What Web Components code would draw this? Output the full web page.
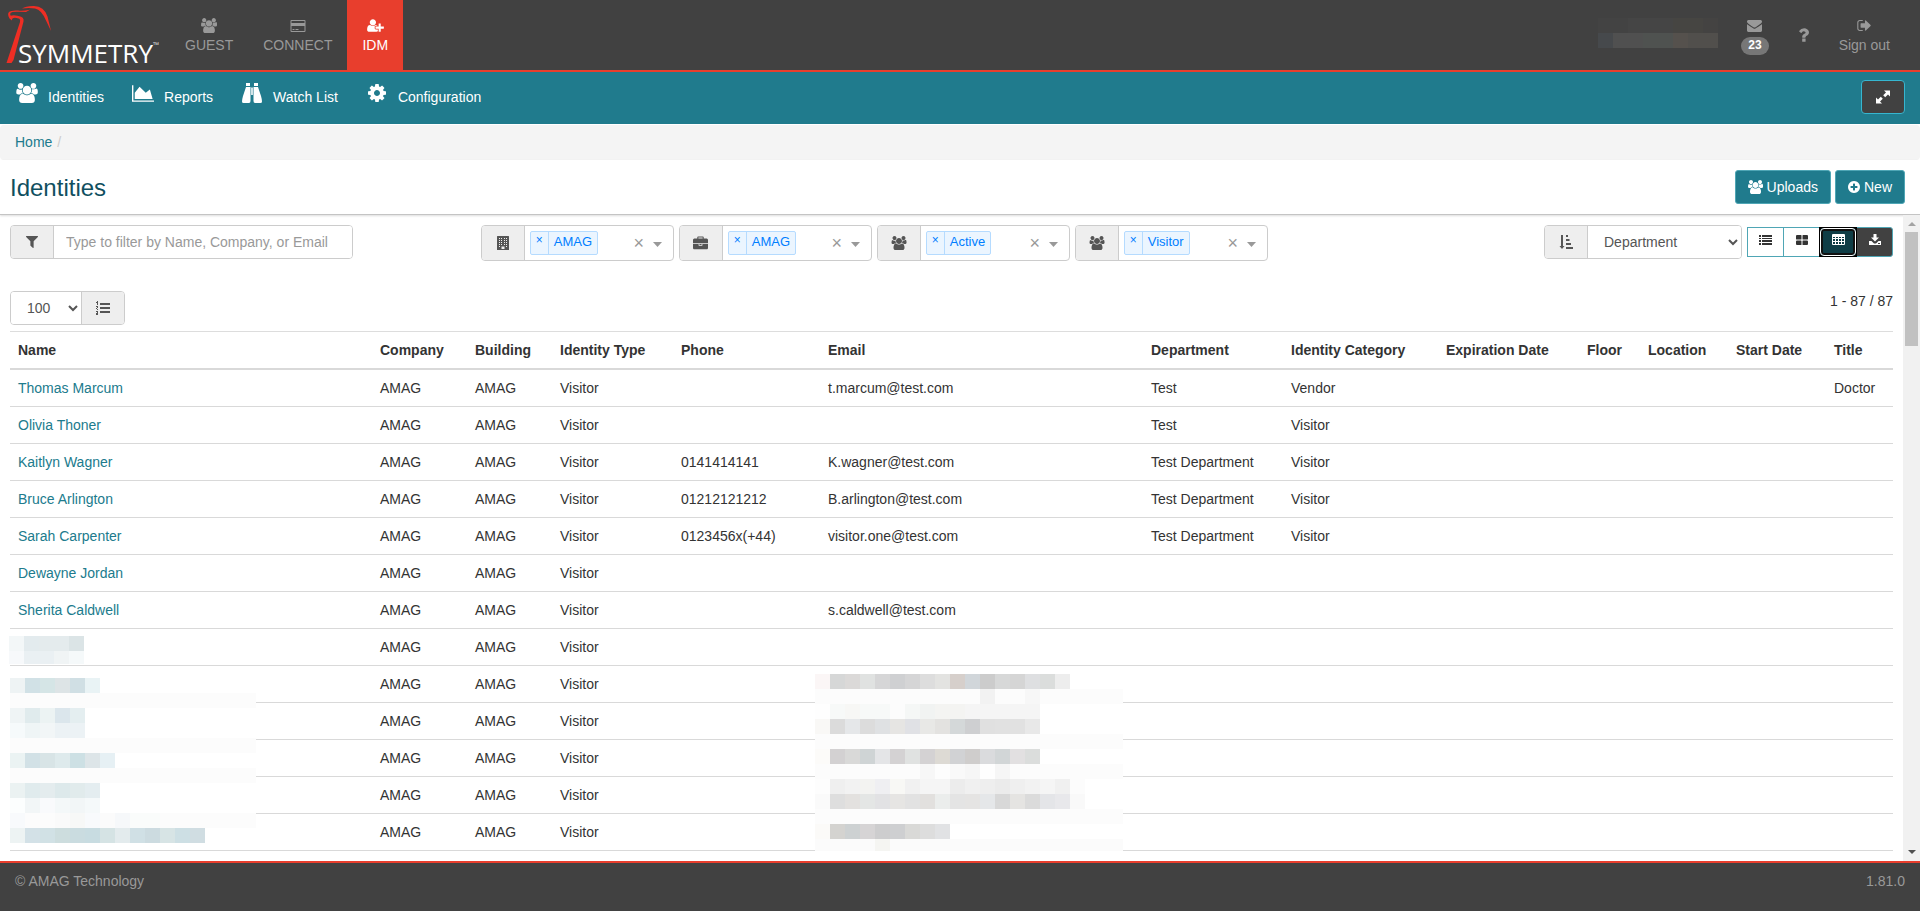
<!DOCTYPE html>
<html lang="en">
<head>
<meta charset="utf-8">
<title>Symmetry - Identities</title>
<style>
html,body{margin:0;height:100%}
body{font:14px/20px "Liberation Sans",Arial,sans-serif;color:#333;background:#fff;
--teal:#207b8d;--dark:#414141;--red:#e83e2d;--line:#ccc}
</style>
</head>
<body>
<idm-app></idm-app>
<script>
const ICONS = {
users:['64 0 1920 1792','<path d="M657 896q-162 5-265 128h-134q-82 0-138-40.5t-56-118.5q0-353 124-353 6 0 43.5 21t97.5 42.5 119 21.5q67 0 133-23-5 37-5 66 0 159 92 283zm1071 637q0 120-73 189.5t-194 69.5h-874q-121 0-194-69.5t-73-189.5q0-53 3.5-103.5t14-109 26.5-108.5 43-97.5 62-81 85.5-53.5 111.5-20q10 0 43 21.5t73 48 107 48 135 21.5 135-21.5 107-48 73-48 43-21.5q61 0 111.5 20t85.5 53.5 62 81 43 97.5 26.5 108.5 14 109 3.5 103.5zm-1024-1277q0 106-75 181t-181 75-181-75-75-181 75-181 181-75 181 75 75 181zm704 384q0 159-112.5 271.5t-271.5 112.5-271.5-112.5-112.5-271.5 112.5-271.5 271.5-112.5 271.5 112.5 112.5 271.5zm576 225q0 78-56 118.5t-138 40.5h-134q-103-123-265-128 92-124 92-283 0-29-5-66 66 23 133 23 59 0 119-21.5t97.5-42.5 43.5-21q124 0 124 353zm-128-609q0 106-75 181t-181 75-181-75-75-181 75-181 181-75 181 75 75 181z"/>'],
card:['0 0 16 14','<path fill-rule="evenodd" d="M1.500 1h13q1 0 1 1v10q0 1-1 1h-13q-1 0-1-1V2q0-1 1-1zM1.500 2v2h13V2zM1.500 7v5h13V7zM2.500 10h2v1h-2zM5.500 10h3v1h-3z"/>'],
userplus:['0 100 2048 1592','<path d="M704 896q-159 0-271.5-112.5t-112.5-271.5 112.5-271.5 271.5-112.5 271.5 112.5 112.5 271.5-112.5 271.5-271.5 112.5zm960 128h352q13 0 22.5 9.5t9.5 22.5v192q0 13-9.5 22.5t-22.5 9.500h-352v352q0 13-9.500 22.500t-22.500 9.500h-192q-13 0-22.500-9.500t-9.500-22.500v-352h-352q-13 0-22.500-9.500t-9.500-22.500v-192q0-13 9.500-22.500t22.500-9.500h352v-352q0-13 9.500-22.500t22.500-9.500h192q13 0 22.500 9.500t9.500 22.500v352zm-736 224q0 52 38 90t90 38h256v238q-68 50-171 50h-874q-121 0-194-69t-73-190q0-53 3.500-103.500t14-109 26.500-108.500 43-97.500 62-81 85.500-53.500 111.500-20q19 0 39 17 79 61 154.500 91.500t164.500 30.500 164.500-30.500 154.500-91.500q20-17 39-17 132 0 217 96h-223q-52 0-90 38t-38 90v192z"/>'],
mail:['0 256 1792 1408','<path d="M1792 710v794q0 66-47 113t-113 47h-1472q-66 0-113-47t-47-113v-794q44 49 101 87 362 246 497 345 57 42 92.5 65.5t94.5 48 110 24.5h2q51 0 110-24.5t94.5-48 92.5-65.5q170-123 498-345 57-39 100-87zm0-294q0 79-49 151t-122 123q-376 261-468 325-10 7-42.5 31t-54 38.5-52 32.5-57.5 27-50 9h-2q-23 0-50-9t-57.5-27-52-32.5-54-38.5-42.5-31q-91-64-262-182.5t-205-142.500q-62-42-117-115.500t-55-136.500q0-78 41.500-130t118.500-52h1472q65 0 112.500 47t47.500 113z"/>'],
question:['376 256 1032 1280','<path d="M1088 1256v240q0 16-12 28t-28 12h-240q-16 0-28-12t-12-28v-240q0-16 12-28t28-12h240q16 0 28 12t12 28zm316-600q0 54-15.5 101t-35 76.5-55 59.5-57.5 43.5-61 35.5q-41 23-68.5 65t-27.5 67q0 17-12 32.5t-28 15.5h-240q-15 0-25.5-18.5t-10.5-37.5v-45q0-83 65-156.5t143-108.5q59-27 84-56t25-76q0-42-46.5-74t-107.5-32q-65 0-108 29-35 25-107 115-13 16-31 16-12 0-25-8l-164-125q-13-10-15.5-25t5.5-28q160-266 464-266 80 0 161 31t146 83 106 127.5 41 158.5z"/>'],
signout:['64 256 1568 1280','<path d="M704 1440q0 4 1 20t.5 26.5-3 23.5-10 19.5-20.5 6.5h-320q-119 0-203.5-84.5t-84.5-203.5v-704q0-119 84.5-203.5t203.5-84.5h320q13 0 22.5 9.5t9.5 22.5q0 4 1 20t.5 26.5-3 23.5-10 19.5-20.5 6.5h-320q-66 0-113 47t-47 113v704q0 66 47 113t113 47h312l11.5 1 11.5 3 8 5.5 7 9 2 13.5zm928-544q0 26-19 45l-544 544q-19 19-45 19t-45-19-19-45v-288h-448q-26 0-45-19t-19-45v-384q0-26 19-45t45-19h448v-288q0-26 19-45t45-19 45 19l544 544q19 19 19 45z"/>'],
chart:['0 128 2048 1536','<path d="M2048 1536v128h-2048v-1536h128v1408h1920zm-384-1024l256 896h-1664v-576l448-576 576 576z"/>'],
binoculars:['0 0 20 20','<path d="M4 0h4v3H4zM12 0h4v3h-4zM4 4h4.500v14q0 2-1.500 2H1.500Q0 20 0 18.500q0-2 1-5.500zM11.500 4H16l3 9q1 3.500 1 5.500 0 1.500-1.500 1.500H13q-1.500 0-1.500-2zM9.200 4.500h1.600V12H9.200z"/>'],
gear:['128 128 1536 1536','<path fill-rule="evenodd" d="M1152 896q0-106-75-181t-181-75-181 75-75 181 75 181 181 75 181-75 75-181zm512-109v222q0 12-8 23t-20 13l-185 28q-19 54-39 91 35 50 107 138 10 12 10 25t-9 23q-27 37-99 108t-94 71q-12 0-26-9l-138-108q-44 23-91 38-16 136-29 186-7 28-36 28h-222q-14 0-24.5-8.5t-11.5-21.5l-28-184q-49-16-90-37l-141 107q-10 9-25 9-14 0-25-11-126-114-165-168-7-10-7-23 0-12 8-23 15-21 51-66.5t54-70.5q-27-50-41-99l-183-27q-13-2-21-12.5t-8-23.5v-222q0-12 8-23t19-13l186-28q14-46 39-92-40-57-107-138-10-12-10-24 0-10 9-23 26-36 98.5-107.5t94.5-71.5q13 0 26 10l138 107q44-23 91-38 16-136 29-186 7-28 36-28h222q14 0 24.5 8.5t11.5 21.5l28 184q49 16 90 37l142-107q9-9 24-9 13 0 25 10 129 119 165 170 7 8 7 22 0 12-8 23-15 21-51 66.5t-54 70.5q26 50 41 98l183 28q13 2 21 12.5t8 23.5z"/>'],
expand:['0 0 14 14','<path d="M8 1h6v6l-2-2-2.800 2.800-2-2L10 3zM0 8l2 2 2.800-2.800 2 2L4 12l2 2H0z" transform="translate(0 -.5)"/>'],
plus:['128 128 1536 1536','<path fill-rule="evenodd" d="M1344 960v-128q0-26-19-45t-45-19h-256v-256q0-26-19-45t-45-19h-128q-26 0-45 19t-19 45v256h-256q-26 0-45 19t-19 45v128q0 26 19 45t45 19h256v256q0 26 19 45t45 19h128q26 0 45-19t19-45v-256h256q26 0 45-19t19-45zm320-64q0 209-103 385.5t-279.5 279.5-385.5 103-385.5-103-279.5-279.5-103-385.5 103-385.5 279.5-279.5 385.5-103 385.5 103 279.5 279.5 103 385.5z"/>'],
filter:['192 256 1408 1408','<path d="M1595 295q17 41-14 70l-493 493v742q0 42-39 59-13 5-25 5-27 0-45-19l-256-256q-19-19-19-45v-486l-493-493q-31-29-14-70 17-39 59-39h1280q42 0 59 39z"/>'],
building:['0 0 12 14','<path fill-rule="evenodd" d="M.500 0h11q.5 0 .5.500v13q0 .5-.5.500h-11q-.5 0-.5-.500V.500Q0 0 .500 0zM2 2v1h1V2zM4 2v1h1V2zM7 2v1h1V2zM9 2v1h1V2zM2 4v1h1V4zM4 4v1h1V4zM7 4v1h1V4zM9 4v1h1V4zM2 6v1h1V6zM4 6v1h1V6zM7 6v1h1V6zM9 6v1h1V6zM2 8v1h1V8zM4 8v1h1V8zM7 8v1h1V8zM9 8v1h1V8zM2 10v1h1v-1zM9 10v1h1v-1zM4.500 10.500V13h3v-2.500z"/>'],
briefcase:['0 32 1792 1504','<path fill-rule="evenodd" d="M640 256h512v-128h-512v128zm1152 640v480q0 66-47 113t-113 47h-1472q-66 0-113-47t-47-113v-480h672v160q0 26 19 45t45 19h320q26 0 45-19t19-45v-160h672zm-768 0v128h-256v-128h256zm768-480v384h-1792v-384q0-66 47-113t113-47h352v-160q0-40 28-68t68-28h576q40 0 68 28t28 68v160h352q66 0 113 47t47 113z"/>'],
sort:['0 0 14 14','<path d="M2 0h2v11h1.500L3 14 .5 11H2zM7 0h2v2H7zM7 4h3.500v2H7zM7 8h5v2H7zM7 12h7v2H7z"/>'],
list:['0 0 14 12','<path d="M0 1h2v2H0zM3 1h10v2H3zM0 4h2v1H0zM3 4h10v1H3zM0 6h2v2H0zM3 6h10v2H3zM0 9h2v2H0zM3 9h10v2H3z"/>'],
large:['0 0 12 12','<path d="M1 1h4q.5 0 .5.500v3.500q0 .5-.5.500H1Q0 5.500 0 5V2q0-1 1-1zM7 1h4q1 0 1 1v3q0 .5-1 .5H7Q6.500 5.500 6.500 5V1.500Q6.500 1 7 1zM1 6.500h4q.5 0 .5.500v3.500q0 .5-.5.500H1q-1 0-1-1V7.500q0-1 1-1zM7 6.500h4q1 0 1 1V10q0 1-1 1H7q-.5 0-.5-.500V7q0-.5.500-.500z"/>'],
table:['0 0 13 12','<path fill-rule="evenodd" d="M1 0h11q1 0 1 1v9q0 1-1 1H1q-1 0-1-1V1q0-1 1-1zM1 3v1h2V3zM4 3v1h2V3zM7 3v1h2V3zM10 3v1h2V3zM1 5v2h2V5zM4 5v2h2V5zM7 5v2h2V5zM10 5v2h2V5zM1 8v2h2V8zM4 8v2h2V8zM7 8v2h2V8zM10 8v2h2V8z"/>'],
download:['0 0 12 12','<path fill-rule="evenodd" d="M4.500 0h3v3.500H10L6 7.500 2 3.500h2.500zM0 7h2.500L5 9.500h2L9.500 7H12v4H0zM9 9v1h2V9z"/>'],
listol:['0 0 14 14','<path d="M4 2h10v2H4zM4 6h10v2H4zM4 10h10v2H4zM1 0h1v4H1zM0 1h1v1H0zM0 5h2v1H0zM1 6h1v1H1zM0 7h1v1H0zM1 8h1v1H1zM0 10h2v1H0zM1 11h1v3H1zM0 12h1v1H0zM0 13h1v1H0z"/>']
};
const define = (name, html) => {
  const t = document.createElement('template');
  t.innerHTML = html;
  customElements.define(name, class extends HTMLElement {
    constructor(){ super(); this.attachShadow({mode:'open'}).append(t.content.cloneNode(true)); }
  });
};

customElements.define('sym-icon', class extends HTMLElement {
  connectedCallback(){
    if (this.shadowRoot) return;
    const [box, body] = ICONS[this.getAttribute('name')];
    const w = this.getAttribute('w') || 14, h = this.getAttribute('h') || w;
    this.attachShadow({mode:'open'}).innerHTML =
      `<style>:host{display:inline-flex;flex:none}svg{display:block;fill:currentColor}</style>
       <svg width="${w}" height="${h}" viewBox="${box}" aria-hidden="true">${body}</svg>`;
  }
});

/* Pixelated cover for private details: rows of colours, '/' splits rows, '*n' repeats. */
customElements.define('privacy-mosaic', class extends HTMLElement {
  connectedCallback(){
    if (this.shadowRoot) return;
    const w = +this.getAttribute('w'), h = +this.getAttribute('h');
    let out = '';
    this.getAttribute('rows').split('/').forEach((row, y) => {
      let x = 0;
      row.trim().split(/\s+/).filter(Boolean).forEach(c => {
        const [col, n = 1] = c.split('*');
        out += `<rect x="${x}" y="${y*15}" width="${n*15}" height="15" fill="#${col}"/>`;
        x += n * 15;
      });
    });
    this.attachShadow({mode:'open'}).innerHTML =
      `<style>:host{display:block}svg{display:block;background:var(--mosaic-bg,#fff)}</style>
       <svg width="${w}" height="${h}" shape-rendering="crispEdges" aria-hidden="true">${out}</svg>`;
  }
});

define('brand-logo', `<style>
:host{display:block;position:relative;width:162px;height:70px}
svg{display:block}
span{position:absolute;left:18px;top:36px;font:26px/34px "Open Sans",sans-serif;color:#fff}
small{position:absolute;left:153px;top:41px;font:8px/8px "Open Sans",sans-serif;color:#ddd}
</style>
<svg width="60" height="70" viewBox="0 0 60 70" aria-hidden="true">
<path fill="#ee2e24" d="M6.500 63 20 22q.5-3-1.500-3.400Q14.500 17 12.500 18.500q-.8.800-.5 2L9.500 18.500Q7 14 9 12q2-2 9-1.500 5 .6 12-.8l-4 2.300-7-.2q-7-.4-8.500 1.200-.8 1.500.3 2.800Q13 14.500 18.500 16q6 .8 5 5.500L13.500 60l-2 3z"/>
<path fill="#ee2e24" d="M22 8.500Q26 5.800 34 6q10 .2 13.500 10.500L51 31l-5-10.500Q41.500 9.800 35 8.500 29 7.600 22 8.500z"/></svg>
<span>SYMMETRY</span><small>™</small>`);

define('header-item', `<style>
:host{display:block;color:#999}
:host([active]){background:var(--red);color:#fff}
a{display:flex;flex-direction:column;align-items:center;gap:2px;height:52px;padding:18px 15px 0;color:inherit;text-decoration:none}
.i{display:flex;height:15px;align-items:center}
</style><a href="#"><span class="i"><slot name="icon"></slot></span><slot></slot></a>`);

define('app-header', `<style>
:host{display:flex;height:70px;background:var(--dark);border-bottom:2px solid var(--red);flex:none}
nav{display:flex;margin-left:8px}
.right{display:flex;margin-left:auto;padding-right:15px}
privacy-mosaic{margin:18px 8px 0 0;--mosaic-bg:#414141}
.badge{background:#777;color:#fff;font:bold 12px/12px "Liberation Sans",Arial,sans-serif;padding:2px 7px 4px;border-radius:10px;margin-top:2px}
.help{display:flex;padding:28px 15px 0 14px;color:#999}
</style>
<brand-logo></brand-logo>
<nav aria-label="Modules">
<header-item><sym-icon slot="icon" name="users" w="16" h="15"></sym-icon>GUEST</header-item>
<header-item><sym-icon slot="icon" name="card" w="16" h="14"></sym-icon>CONNECT</header-item>
<header-item active><sym-icon slot="icon" name="userplus" w="17" h="13"></sym-icon>IDM</header-item>
</nav>
<div class="right">
<privacy-mosaic w="120" h="30" rows="434343*2 454545*3 464542*2 444342/46494c 505050*2 4f5250*2 55514d 514f4c*2"></privacy-mosaic>
<header-item><sym-icon slot="icon" name="mail" w="15" h="12"></sym-icon><span class="badge">23</span></header-item>
<a class="help" href="#" aria-label="Help"><sym-icon name="question" w="11" h="14"></sym-icon></a>
<header-item><sym-icon slot="icon" name="signout" w="14" h="11"></sym-icon>Sign out</header-item>
</div>`);

define('nav-link', `<style>
:host{display:block}
a{display:flex;align-items:flex-start;color:#fff;text-decoration:none}
.i{display:flex;width:22px;height:20px;align-items:center;justify-content:center;margin-right:10px}
.t{margin-top:4px}
</style><a href="#"><span class="i"><slot name="icon"></slot></span><span class="t"><slot></slot></span></a>`);

define('module-nav', `<style>
:host{display:flex;align-items:flex-start;height:52px;box-sizing:border-box;padding:8px 15px 0 16px;background:var(--teal);flex:none}
nav{display:flex;gap:28px;padding-top:3px}
button{margin-left:auto;width:44px;height:34px;padding:0;display:flex;align-items:center;justify-content:center;background:var(--dark);border:1px solid #36b6d0;border-radius:4px;color:#fff}
</style>
<nav aria-label="Identity management">
<nav-link><sym-icon slot="icon" name="users" w="22" h="20"></sym-icon>Identities</nav-link>
<nav-link><sym-icon slot="icon" name="chart" w="22" h="17"></sym-icon>Reports</nav-link>
<nav-link><sym-icon slot="icon" name="binoculars" w="20" h="20"></sym-icon>Watch List</nav-link>
<nav-link><sym-icon slot="icon" name="gear" w="18" h="18"></sym-icon>Configuration</nav-link>
</nav>
<button aria-label="Full screen"><sym-icon name="expand" w="14"></sym-icon></button>`);

define('bread-crumb', `<style>
:host{display:block;background:#f4f4f4;border-radius:4px;margin-top:1px;padding:7px 15px 8px;flex:none}
a{color:var(--teal);text-decoration:none}i{color:#ccc;font-style:normal;padding:0 5px}
</style><a href="#">Home</a><i>/</i>`);

define('page-title', `<style>
:host{display:flex;align-items:center;height:54px;padding:0 15px 0 10px;border-bottom:1px solid #c4c4c4;box-shadow:0 1px 2px #ddd;flex:none}
h1{margin:0;padding-top:2px;font-size:24px;line-height:28px;font-weight:400;color:#104f5f}
div{margin-left:auto;display:flex;gap:4px}
button{height:34px;padding:0 12px;display:flex;align-items:center;gap:4px;background:var(--teal);border:1px solid #4fa6b5;border-radius:3px;color:#fff;font:inherit}
</style><h1>Identities</h1><div>
<button><sym-icon name="users" w="15" h="14"></sym-icon>Uploads</button>
<button><sym-icon name="plus" w="12" h="12"></sym-icon>New</button></div>`);

/* A bordered control with a grey icon cell before or after the slotted field. */
define('input-group', `<style>
:host{display:flex;height:34px;box-sizing:border-box;border:1px solid #ccc;border-radius:4px;background:#fff;overflow:hidden;color:#555}
.a{width:42px;flex:none;display:flex;align-items:center;justify-content:center;background:#eee;border-right:1px solid #ccc}
.f{flex:1;display:flex;min-width:0}
:host([after]) .a{order:1;border-right:0;border-left:1px solid #ccc}
</style><span class="a"><slot name="icon"></slot></span><span class="f"><slot></slot></span>`);

customElements.define('tag-select', class extends HTMLElement {
  connectedCallback(){
    if (this.shadowRoot) return;
    const tag = this.getAttribute('tag'), label = this.getAttribute('label');
    this.attachShadow({mode:'open'}).innerHTML = `<style>
:host{display:block;width:193px}
input-group{height:36px}
.box{flex:1;display:flex;align-items:center;padding:0 11px 0 5px}
.tag{display:flex;height:22px;border:1px solid #b5dbff;border-radius:2px;background:#ebf5ff;color:#007eff;font-size:13px;line-height:19px}
.tag button{width:18px;border-right:1px solid #b5dbff;color:#007eff;font-size:12px;line-height:16px;align-self:stretch;display:flex;justify-content:center}
.tag span{padding:0 5px}
button{border:0;background:none;padding:0;font:inherit;color:#999}
.clear{margin-left:auto;font-size:18px;line-height:20px;width:12px}
.open{width:9px;height:5px;margin:2px 0 0 8px}
.open svg{display:block;fill:#999}
</style>
<input-group role="group" aria-label="${label}"><sym-icon slot="icon" name="${this.getAttribute('icon')}" w="${this.getAttribute('w')}" h="14"></sym-icon>
<div class="box"><div class="tag"><button aria-label="Remove ${tag}">×</button><span>${tag}</span></div>
<button class="clear" aria-label="Clear ${label}">×</button>
<button class="open" aria-label="Open ${label}"><svg width="9" height="5"><path d="M0 0h9L4.500 5z"/></svg></button></div></input-group>`;
  }
});

define('view-switch', `<style>
:host{display:flex;height:30px;margin-top:2px}
button{width:37px;margin-left:-1px;padding:0 0 4px 1px;display:flex;align-items:center;justify-content:center;background:#fff;border:1px solid #4fa6b5;color:#333}
button:first-child{margin-left:0;border-radius:3px 0 0 3px}
button:last-child{border-radius:0 3px 3px 0;background:var(--dark);color:#fff}
button.on{position:relative;width:38px;background:#0f3d46;border-color:#000;color:#fff;overflow:hidden}
button.on::after{content:"";position:absolute;inset:0;border:1px solid #fff;border-radius:4px;box-shadow:inset 0 0 0 2px #111,0 0 0 3px #000}
</style>
<button aria-label="List view"><sym-icon name="list" w="14" h="12"></sym-icon></button>
<button aria-label="Card view"><sym-icon name="large" w="12" h="12"></sym-icon></button>
<button class="on" aria-label="Table view" aria-pressed="true"><sym-icon name="table" w="13" h="12"></sym-icon></button>
<button aria-label="Download"><sym-icon name="download" w="12" h="12"></sym-icon></button>`);

define('filter-bar', `<style>
:host{display:grid;grid-template-columns:1fr 2fr 1fr;height:36px;align-items:start}
.search{width:343px}
input,select{flex:1;min-width:0;border:0;background:#fff;font:inherit;color:#555;padding:0 12px;outline:0}
input::placeholder{color:#999;opacity:1}
.tags{display:flex;gap:5px}
.right{display:flex;justify-content:flex-end;gap:6px}
.sort{width:198px}
.sort select{padding-right:0}
</style>
<input-group class="search"><sym-icon slot="icon" name="filter" w="12" h="12"></sym-icon><input type="text" aria-label="Filter identities" placeholder="Type to filter by Name, Company, or Email"></input-group>
<div class="tags">
<tag-select icon="building" w="12" label="Building" tag="AMAG"></tag-select>
<tag-select icon="briefcase" w="15" label="Company" tag="AMAG"></tag-select>
<tag-select icon="users" w="16" label="Status" tag="Active"></tag-select>
<tag-select icon="users" w="16" label="Identity type" tag="Visitor"></tag-select>
</div>
<div class="right"><input-group class="sort"><sym-icon slot="icon" name="sort" w="14"></sym-icon><select aria-label="Sort by"><option>Department</option></select></input-group>
<view-switch></view-switch></div>`);

define('pager-bar', `<style>
:host{display:flex;justify-content:space-between;margin:30px 0 6px}
input-group{width:115px}
select{flex:1;border:0;background:#fff;font:inherit;color:#555;padding:0 0 0 12px}
</style><input-group after><sym-icon slot="icon" name="listol" w="14"></sym-icon><select aria-label="Rows per page"><option>100</option></select></input-group><span>1 - 87 / 87</span>`);

const COLS = [['Name',0],['Company',95],['Building',85],['Identity Type',121],['Phone',147],['Email',323],['Department',140],['Identity Category',155],['Expiration Date',141],['Floor',61],['Location',88],['Start Date',98],['Title',67]];
const PEOPLE = [
 ['Thomas Marcum','','t.marcum@test.com','Test','Vendor','Doctor'],
 ['Olivia Thoner','','','Test','Visitor',''],
 ['Kaitlyn Wagner','0141414141','K.wagner@test.com','Test Department','Visitor',''],
 ['Bruce Arlington','01212121212','B.arlington@test.com','Test Department','Visitor',''],
 ['Sarah Carpenter','0123456x(+44)','visitor.one@test.com','Test Department','Visitor',''],
 ['Dewayne Jordan','','','','',''],
 ['Sherita Caldwell','','s.caldwell@test.com','','',''],
 ...Array.from({length:6}, () => ['','','','','',''])
];
customElements.define('identity-table', class extends HTMLElement {
  connectedCallback(){
    if (this.shadowRoot) return;
    this.attachShadow({mode:'open'}).innerHTML = `<style>
:host{display:block;position:relative}
table{width:100%;table-layout:fixed;border-collapse:separate;border-spacing:0;border-top:1px solid #ddd}
th,td{height:20px;padding:8px;text-align:left;white-space:nowrap;border-bottom:1px solid #d9d9d9}
th{border-bottom-width:2px}
a{color:var(--teal);text-decoration:none}
privacy-mosaic{position:absolute}
.n1{left:-1px;top:305px}.n2{left:0;top:347px}.em{right:770px;top:343px}
</style><table><colgroup>${COLS.map(([,w]) => w ? `<col style="width:${w}px">` : '<col>').join('')}</colgroup>
<thead><tr>${COLS.map(([c]) => `<th scope="col">${c}</th>`).join('')}</tr></thead>
<tbody>${PEOPLE.map(([n,p,e,d,c,t]) => '<tr>' + [n ? `<a href="#">${n}</a>` : '','AMAG','AMAG','Visitor',p,e,d,c,'','','','',t].map(v => `<td>${v}</td>`).join('') + '</tr>').join('')}</tbody></table>
<privacy-mosaic class="n1" w="75" h="28" rows="f3f7f8 e3ebee e4ebed*2 dbe4e6/f7f9fb eaf0f3*2 f0f4f5 f5f9fa"></privacy-mosaic>
<privacy-mosaic class="n2" w="246" h="165" rows="eef3f4 d1e1e6 d5e5e6 dde4e6 d0dfe4 e9f3f5/fcfcfc*17/eff4f5 e0ebed ecf3f3 dbe6ec e4eef0/f6fafb eff5f6 f2f6f7 ecf2f5*2/fcfcfc*17/ebf3f3 d2e1e6 d8e4e6 deeaec cde0e4 dde5e8 e6f0f4/fcfcfc*17/ebf2f2 e0ebed e4ecee dde9eb e1ebec e4edf0/fcfefe f2f6f7 f9fafc f4f8f9 f2f6f7 f5f9fa/f8fafc fcfcfc*2 fafafa f7f8f7 f8fafc fbfbfb f6f8fa fafcfb*2 fcfcfc*8/edf3f3 d3e1e7 d1e1e5 cdddde cadce0 c8dce1 d5e3e4 e3ebed d0e0e5 ccdbe0 d7e4e5 cddfe4 d0dde2"></privacy-mosaic>
<privacy-mosaic class="em" w="308" h="177" rows="fbf6f6 d6d7d7 dbd9d8 e0e2e1 d6d6d7 cfd0d2 d5d5d6 dddddd e3e3e1 d6cfcb d1d6da cccccc d7d8d8 d5d5d5 dedfe1 dbdddc ededed/fcfcfc*11 f2f2f2 fcfcfc*2 f7f7f7 fcfcfc*6/fefefe f7f9f8 f7f7f5 f7f9f8*2 fcfcfc f5f7f6 f1f3f2 f4f4f2*2 f5f5f5*5/f9f8f6 dbdbdb e5e7e9 dcdcdc dfe1e3 e6e5e3 e0e1e5 e8e8e6 e3e2e0 d4d8d9 cecfd1 e0e0e0 e1e1e1*2 e8e8e8/fcfcfc*21/fcfbf9 d3d1d2 d9d9d8 cfd4d5 e4e5e7 d4d2d3 e0e2e1 d4d2d3 dddad4 d1d2d4 cfcdcc dadbdd d2d6d7 e2e0e1 dbdddc/fcfcfc*7 f7f7f7 fdfdfd f9f9f9 f6f6f6 fefefe f6f6f6 fcfcfc*8/fdfdfd efefef f2f2f2 f3f3f1 efeff2 f8f8f5 f1f1f1 f5f5f5*2 ececec f0f0f0 eeeeee ebebeb efefef f2f2f2 f5f5f5 f0f0f0 fcfcfc/fafafa dedede e3e1df e4e6e5 e2e2e4 e6e5e3 e2e2e2 e2e0de ebedec e4e4e4 e5e4e3 e5e7e9 d8d8d8 e5e4e2 dbdbdb e4e5e8 e8e8eb f9f9f9/fcfcfc*21/fbfaf8 d4d3d0 cdd1d2 d6d4d5 cdcdce cecfd1 d9d9d7 dddddd e1e2e4/fbfbfb*4 f5f5f2 fbfbfb*16"></privacy-mosaic>`;
  }
});

define('scroll-pane', `<style>
:host{flex:1;min-height:0;display:grid;grid-template-columns:minmax(0,1fr) 17px;overflow:hidden}
.c{padding:10px 10px 0;min-height:0;overflow:hidden}
.bar{display:flex;flex-direction:column;align-items:center;background:#f1f1f1;padding:7px 0}
.thumb{width:13px;height:114px;margin-top:6px;background:#c1c1c1}
.down{margin-top:auto}
svg{display:block}
</style><div class="c"><slot></slot></div>
<div class="bar" aria-hidden="true"><svg width="8" height="4" fill="#a3a3a3"><path d="M0 4h8L4 0z"/></svg><div class="thumb"></div><svg class="down" width="8" height="4" fill="#505050"><path d="M0 0h8L4 4z"/></svg></div>`);

define('app-footer', `<style>
:host{display:flex;justify-content:space-between;height:50px;box-sizing:border-box;padding:8px 15px;background:var(--dark);color:#999;flex:none;border-top:2px solid var(--red)}
</style><span>© AMAG Technology</span><span>1.81.0</span>`);

define('idm-app', `<style>
:host{display:flex;flex-direction:column;height:100vh;overflow:hidden}
</style>
<app-header></app-header><module-nav></module-nav><bread-crumb></bread-crumb><page-title></page-title>
<scroll-pane><filter-bar></filter-bar><pager-bar></pager-bar><identity-table></identity-table></scroll-pane>
<app-footer></app-footer>`);
</script>
</body>
</html>
